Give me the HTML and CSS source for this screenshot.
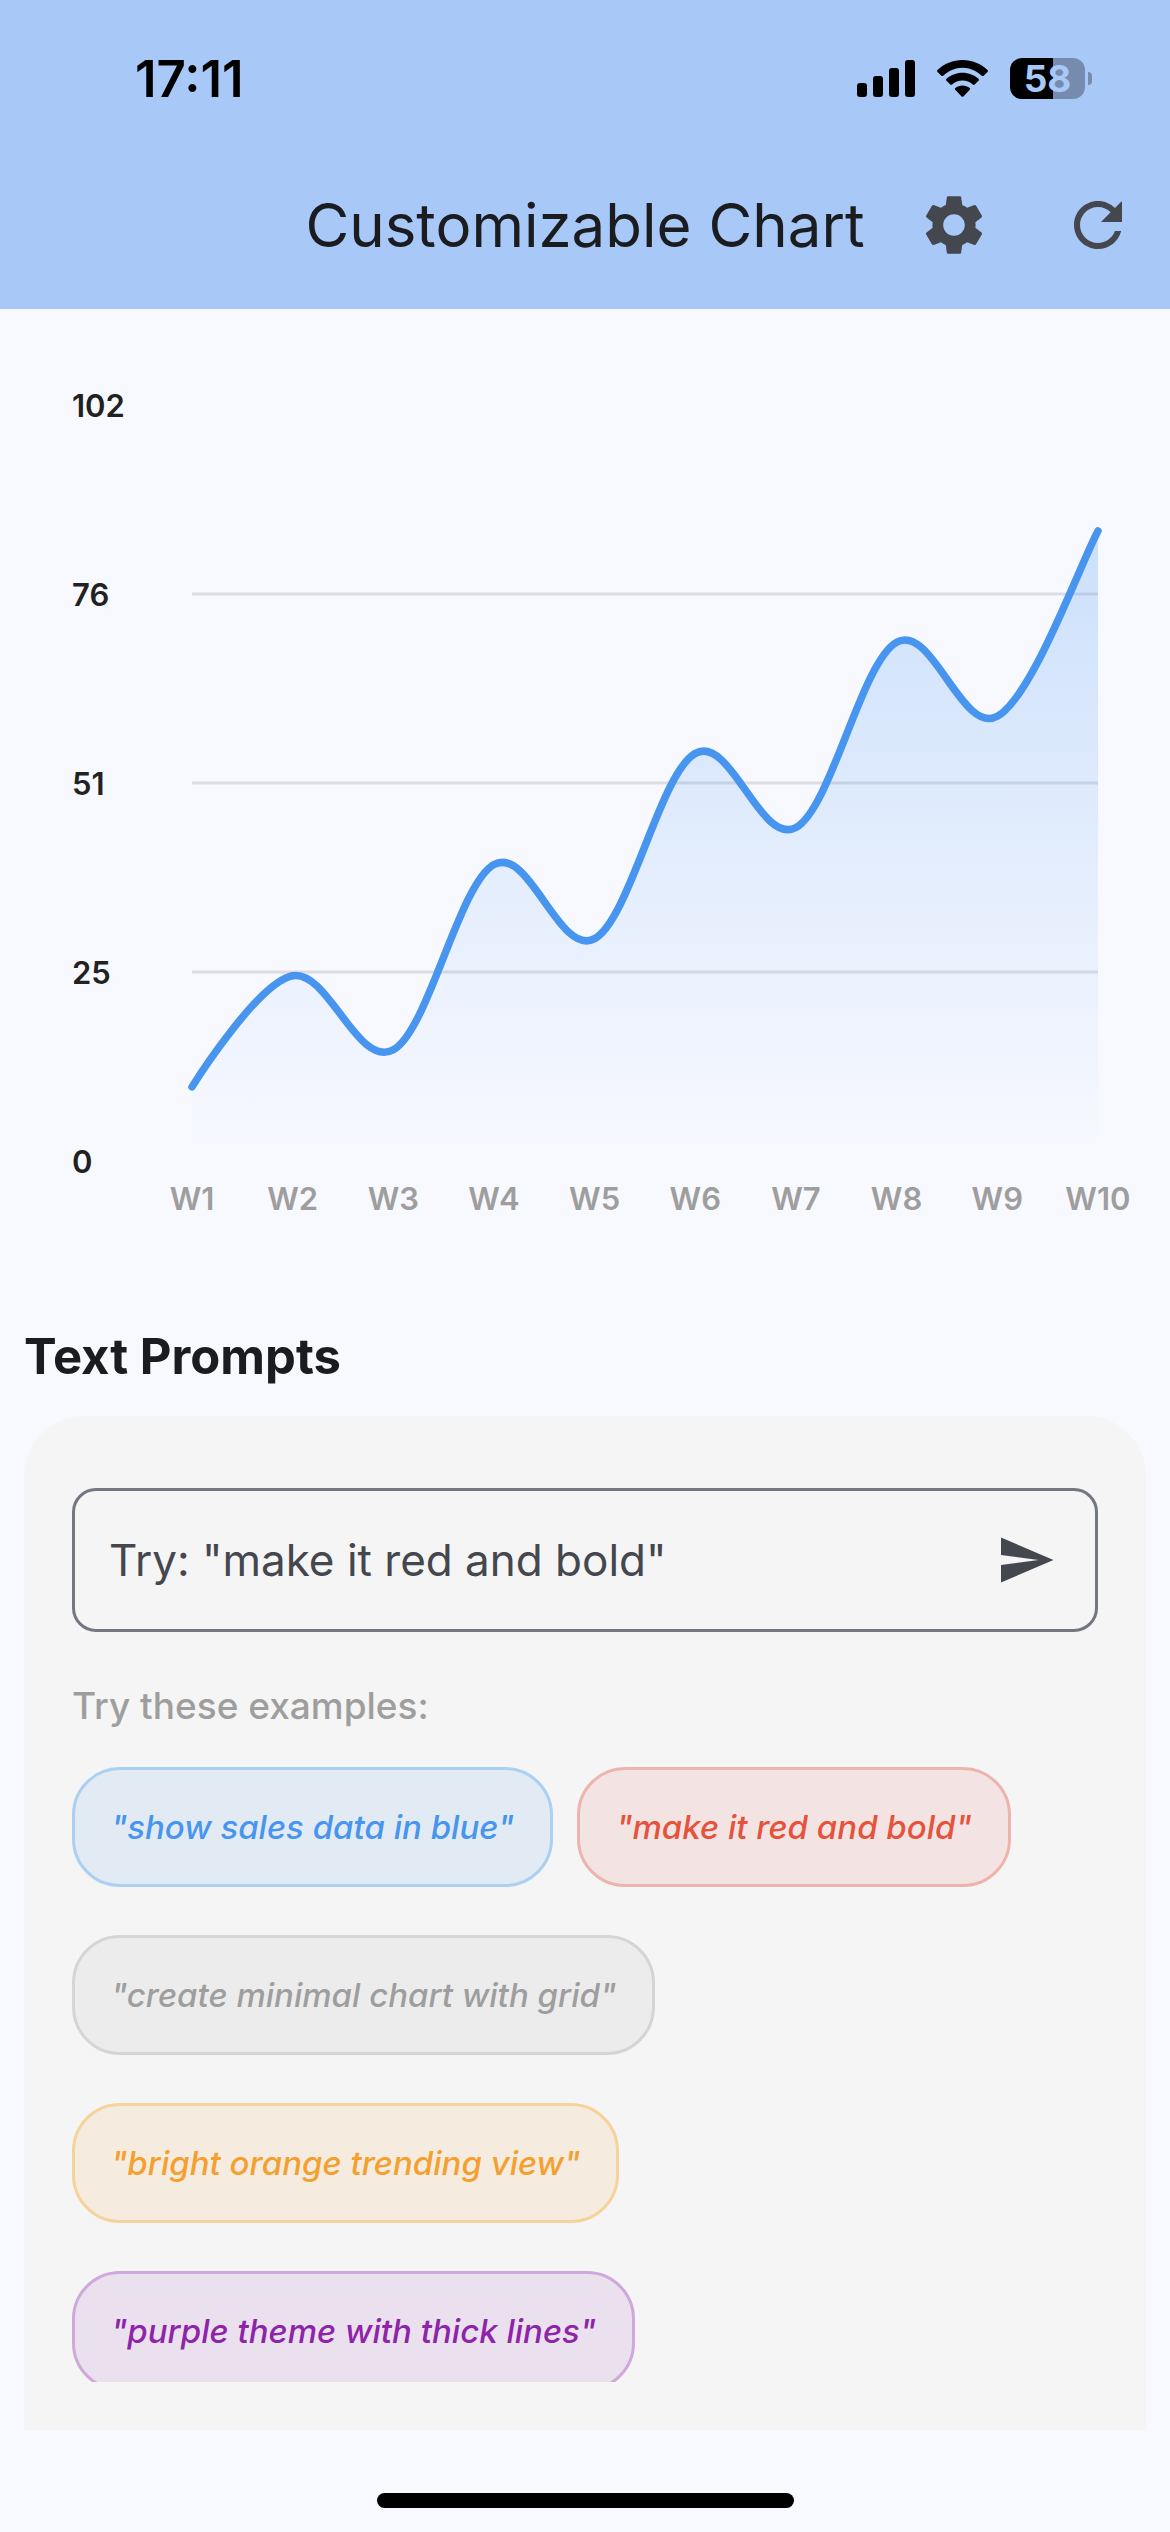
FILE: index.html
```html
<!DOCTYPE html>
<html lang="en">
<head>
<meta charset="utf-8">
<meta name="viewport" content="width=device-width, initial-scale=1">
<title>Customizable Chart</title>
<link rel="stylesheet" href="styles.css">
</head>
<body>
<header class="header">
  <div class="status">
    <span class="time">17:11</span>
    <div class="indicators">
      <svg class="signal" viewBox="0 0 58 37" aria-hidden="true">
        <rect x="0" y="23" width="10" height="14" rx="3"/>
        <rect x="16" y="16" width="10" height="21" rx="3"/>
        <rect x="32" y="8" width="10" height="29" rx="3"/>
        <rect x="48" y="0" width="10" height="37" rx="3"/>
      </svg>
      <svg class="wifi" viewBox="0 0 51 37" aria-hidden="true">
        <path d="M25.500 0C35 0 44 3.700 50.500 10c.6.600.6 1.300 0 1.900l-3.900 3.800c-.5.500-1.300.5-1.800 0C39.500 10.700 32.800 7.700 25.500 7.700S11.500 10.700 6.200 15.700c-.5.500-1.300.5-1.800 0L.5 11.900c-.6-.6-.6-1.300 0-1.900C7 3.700 16 0 25.500 0z"/>
        <path d="M25.500 12.700c6.200 0 11.800 2.300 16 6.100.6.600.6 1.300.1 1.900l-4 3.900c-.5.500-1.200.5-1.800 0-2.800-2.500-6.400-4-10.300-4s-7.500 1.500-10.300 4c-.6.500-1.300.5-1.800 0l-4-3.900c-.5-.6-.5-1.300.1-1.900 4.200-3.800 9.800-6.100 16-6.100z"/>
        <path d="M25.500 25.500c2.700 0 5.200.9 7.200 2.500.6.500.6 1.200.1 1.800l-6.400 6.600c-.5.600-1.300.6-1.800 0l-6.400-6.600c-.5-.6-.5-1.300.1-1.800 2-1.600 4.500-2.500 7.200-2.500z"/>
      </svg>
      <div class="battery"><span class="charge">58</span><span class="nub"></span></div>
    </div>
  </div>
  <div class="appbar">
    <h1 class="title">Customizable Chart</h1>
    <div class="actions">
      <button class="action" type="button" aria-label="Settings">
        <svg class="icon" viewBox="0 0 24 24" aria-hidden="true"><path d="M19.140 12.940c.04-.3.060-.61.060-.94 0-.32-.02-.64-.07-.94l2.030-1.580c.18-.14.230-.41.120-.61l-1.920-3.320c-.12-.22-.37-.29-.59-.22l-2.390.96c-.5-.38-1.030-.7-1.620-.94L14.400 2.810c-.04-.24-.24-.41-.48-.41h-3.840c-.24 0-.43.170-.47.410L9.250 5.350C8.660 5.590 8.120 5.920 7.630 6.290L5.240 5.330c-.22-.08-.47 0-.59.220L2.740 8.870c-.12.210-.08.470.120.610l2.030 1.580c-.05.300-.09.630-.09.940s.02.640.070.940l-2.030 1.580c-.18.140-.23.410-.12.610l1.920 3.320c.12.220.37.290.59.220l2.390-.96c.5.380 1.030.7 1.620.94l.36 2.540c.05.240.24.410.48.410h3.840c.24 0 .44-.17.470-.41l.36-2.540c.59-.24 1.130-.56 1.620-.94l2.390.96c.22.080.47 0 .59-.22l1.920-3.320c.12-.22.070-.47-.12-.61L19.140 12.940zM12 15.600c-1.980 0-3.600-1.620-3.600-3.600s1.620-3.600 3.600-3.600 3.600 1.620 3.600 3.600-1.620 3.600-3.600 3.600z"/></svg>
      </button>
      <button class="action" type="button" aria-label="Refresh">
        <svg class="icon" viewBox="0 0 24 24" aria-hidden="true"><path d="M17.650 6.350C16.200 4.900 14.210 4 12 4c-4.420 0-7.990 3.580-7.990 8s3.570 8 7.990 8c3.730 0 6.840-2.550 7.730-6h-2.080c-.82 2.330-3.040 4-5.650 4-3.310 0-6-2.690-6-6s2.690-6 6-6c1.660 0 3.140.69 4.220 1.780L13 11h7V4l-2.350 2.350z"/></svg>
      </button>
    </div>
  </div>
</header>

<main class="main">
  <section class="chart" aria-label="Weekly values">
    <ul class="y-axis"><li>102</li><li>76</li><li>51</li><li>25</li><li>0</li></ul>
    <svg class="plot" viewBox="0 0 302 252" aria-hidden="true">
      <defs>
        <linearGradient id="fade" x1="0" y1="0" x2="0" y2="1">
          <stop offset="0" stop-color="#4895ef" stop-opacity=".25"/>
          <stop offset="1" stop-color="#4895ef" stop-opacity="0"/>
        </linearGradient>
      </defs>
      <path class="grid" d="M0 63H302M0 126H302M0 189H302"/>
      <path id="area" fill="url(#fade)"/>
      <path id="line" class="line"/>
    </svg>
    <ul class="x-axis"><li>W1</li><li>W2</li><li>W3</li><li>W4</li><li>W5</li><li>W6</li><li>W7</li><li>W8</li><li>W9</li><li>W10</li></ul>
  </section>

  <h2 class="heading">Text Prompts</h2>
  <section class="panel">
    <form class="prompt">
      <input class="prompt-input" type="text" aria-label="Prompt" placeholder='Try: "make it red and bold"'>
      <button class="send" type="button" aria-label="Send">
        <svg class="send-icon" viewBox="0 0 24 24" aria-hidden="true"><path d="M2.010 21L23 12 2.010 3 2 10l15 2-15 2z"/></svg>
      </button>
    </form>
    <p class="hint">Try these examples:</p>
    <div class="chips">
      <button class="chip blue" type="button">"show sales data in blue"</button>
      <button class="chip red" type="button">"make it red and bold"</button>
      <button class="chip gray" type="button">"create minimal chart with grid"</button>
      <button class="chip orange" type="button">"bright orange trending view"</button>
      <button class="chip purple" type="button">"purple theme with thick lines"</button>
    </div>
  </section>
</main>
<footer class="footer"><div class="home-bar"></div></footer>
<script src="chart.js"></script>
</body>
</html>
```
FILE: styles.css
```css
* { box-sizing: border-box; }

body {
  margin: 0;
  min-height: 100vh;
  display: flex;
  flex-direction: column;
  background: #f8f9ff;
  color: #1a1c20;
  font-family: Inter, "Liberation Sans", sans-serif;
}

h1, h2, p, ul { margin: 0; padding: 0; }
ul { list-style: none; }
button { font: inherit; cursor: pointer; }

/* Header */
.header { background: #a8c8f8; color: #1a1c20; }

.status {
  display: flex;
  justify-content: space-between;
  align-items: center;
  height: 141px;
  padding: 15px 78px 0 135px;
  color: #000;
}
.time { font-size: 51px; font-weight: 600; }

.indicators { display: flex; align-items: center; gap: 22px; }
.signal { width: 58px; height: 37px; }
.wifi { width: 51px; height: 37px; }

.battery { display: flex; align-items: center; gap: 3px; }
.charge {
  width: 75px;
  height: 41px;
  border-radius: 12px;
  background: linear-gradient(to right, #000 58%, #768cae 58%);
  color: #a8c8f8;
  font-size: 37px;
  font-weight: 700;
  line-height: 41px;
  text-align: center;
}
.nub { width: 4px; height: 13px; border-radius: 0 4px 4px 0; background: #768cae; }

.appbar {
  display: grid;
  grid-template-columns: 1fr auto 1fr;
  align-items: center;
  height: 168px;
}
.title { grid-column: 2; font-size: 60px; font-weight: 400; line-height: 84px; white-space: nowrap; }
.actions { display: flex; justify-content: flex-end; }
.action {
  display: grid;
  place-items: center;
  width: 144px;
  height: 144px;
  padding: 0;
  border: 0;
  background: none;
}
.icon { width: 72px; height: 72px; fill: #44474e; }

/* Chart */
.main { flex: 1; padding: 0 24px; }
.chart {
  display: grid;
  grid-template-columns: 120px 1fr;
  padding: 96px 48px 0;
}
.y-axis {
  display: flex;
  flex-direction: column;
  justify-content: space-between;
  color: #212121;
  font-size: 31px;
  font-weight: 600;
}
.y-axis li { display: flex; align-items: center; height: 0; }
.plot { display: block; width: 100%; overflow: visible; }
.grid { fill: none; stroke: #dcdde2; stroke-width: 1; }
.line { fill: none; stroke: #4895ef; stroke-width: 2.5; stroke-linecap: round; stroke-linejoin: round; }
.x-axis {
  grid-column: 2;
  display: flex;
  justify-content: space-between;
  padding-top: 20px;
  color: #9e9e9e;
  font-size: 31px;
  font-weight: 600;
  line-height: 36px;
}
.x-axis li { display: flex; justify-content: center; width: 0; }

/* Prompts */
.heading { margin-top: 108px; font-size: 49px; font-weight: 700; line-height: 64px; }
.panel {
  margin-top: 27px;
  height: 1014px;
  padding: 72px 48px 48px;
  border-radius: 60px 60px 0 0;
  background: #f5f5f5;
  display: flex;
  flex-direction: column;
}
.prompt {
  display: flex;
  align-items: center;
  height: 144px;
  flex: none;
  padding: 0 0 0 34px;
  border: 3px solid #73777f;
  border-radius: 24px;
}
.prompt-input {
  flex: 1;
  min-width: 0;
  padding: 0;
  border: 0;
  outline: 0;
  background: none;
  color: #1a1c20;
  font: 400 44px Inter, "Liberation Sans", sans-serif;
}
.prompt-input::placeholder { color: #44474e; opacity: 1; }
.send { display: grid; place-items: center; width: 138px; height: 138px; padding: 0; border: 0; background: none; }
.send-icon { width: 60px; height: 60px; fill: #44474e; }

.hint { margin: 48px 0 36px; color: #9e9e9e; font-size: 37px; font-weight: 500; line-height: 51px; }

.chips {
  flex: 1;
  min-height: 0;
  overflow: hidden;
  display: flex;
  flex-wrap: wrap;
  align-content: flex-start;
  gap: 48px 24px;
}
.chip {
  height: 120px;
  padding: 0 36px;
  border: 3px solid;
  border-radius: 48px;
  font-size: 33px;
  font-weight: 500;
  font-style: italic;
  white-space: nowrap;
}
.blue { color: #4895ef; background: #e2eaf4; border-color: #abd0f2; }
.red { color: #e5533d; background: #f3e4e3; border-color: #edb4ae; }
.gray { color: #9e9e9e; background: #ececec; border-color: #d5d5d5; }
.orange { color: #f4a030; background: #f5ecdf; border-color: #f5d39b; }
.purple { color: #8e24aa; background: #ebe0ed; border-color: #cfa8dc; }

.footer { display: flex; justify-content: center; align-items: flex-end; height: 102px; padding-bottom: 24px; }
.home-bar { width: 417px; height: 15px; border-radius: 8px; background: #000; }
```
FILE: chart.js
```js
const values = [10, 25, 15, 40, 30, 55, 45, 70, 60, 85];
const max = 102;
const width = 302;
const height = 252;
const smoothness = 0.35;

const points = values.map((value, i) => ({
  x: (i * width) / (values.length - 1),
  y: height - (value / max) * height,
}));

let path = `M${points[0].x} ${points[0].y}`;
let tangent = { x: 0, y: 0 };
for (let i = 1; i < points.length; i++) {
  const previous = points[i - 1];
  const current = points[i];
  const next = points[i + 1] || current;
  const start = { x: previous.x + tangent.x, y: previous.y + tangent.y };
  tangent = {
    x: ((next.x - previous.x) / 2) * smoothness,
    y: ((next.y - previous.y) / 2) * smoothness,
  };
  path += `C${start.x} ${start.y} ${current.x - tangent.x} ${current.y - tangent.y} ${current.x} ${current.y}`;
}

document.getElementById('line').setAttribute('d', path);
document.getElementById('area').setAttribute('d', `${path}V${height}H0Z`);
```
